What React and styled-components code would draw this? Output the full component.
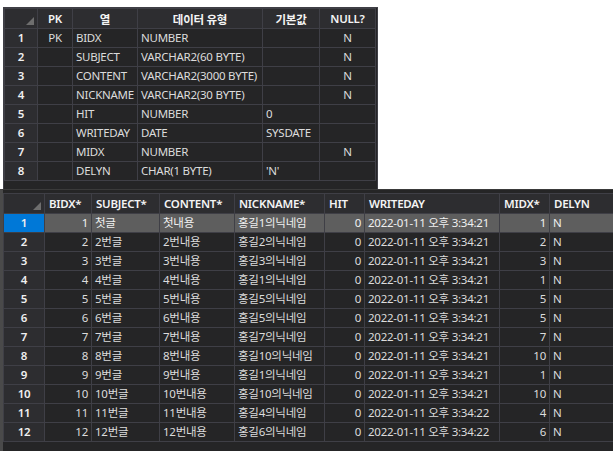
import React from "react";
import styled, { createGlobalStyle } from "styled-components";

const GlobalStyle = createGlobalStyle`
  html, body {
    margin: 0;
    padding: 0;
    background: #ffffff;
  }
  body {
    font-family: "Noto Sans", "Noto Sans CJK KR", sans-serif;
    font-size: 11.5px;
    letter-spacing: -0.25px;
  }
`;

const columns = [
  { name: "PK", w: 35 },
  { name: "열", w: 65 },
  { name: "데이터 유형", w: 125 },
  { name: "기본값", w: 57 },
  { name: "NULL?", w: 56 },
];

const columnRows = [
  ["PK", "BIDX", "NUMBER", "", "N"],
  ["", "SUBJECT", "VARCHAR2(60 BYTE)", "", "N"],
  ["", "CONTENT", "VARCHAR2(3000 BYTE)", "", "N"],
  ["", "NICKNAME", "VARCHAR2(30 BYTE)", "", "N"],
  ["", "HIT", "NUMBER", "0", ""],
  ["", "WRITEDAY", "DATE", "SYSDATE", ""],
  ["", "MIDX", "NUMBER", "", "N"],
  ["", "DELYN", "CHAR(1 BYTE)", "'N'", ""],
];

const dataCols = [
  { name: "BIDX*", w: 47, align: "right" },
  { name: "SUBJECT*", w: 68 },
  { name: "CONTENT*", w: 75 },
  { name: "NICKNAME*", w: 90 },
  { name: "HIT", w: 40, align: "right" },
  { name: "WRITEDAY", w: 135 },
  { name: "MIDX*", w: 50, align: "right" },
  { name: "DELYN", w: 80 },
];

const midx = [1, 2, 3, 1, 5, 5, 7, 10, 1, 10, 4, 6];

const dataRows = midx.map((m, i) => {
  const n = i + 1;
  return [
    String(n),
    n === 1 ? "첫글" : `${n}번글`,
    n === 1 ? "첫내용" : `${n}번내용`,
    `홍길${m}의닉네임`,
    "0",
    `2022-01-11 오후 3:34:${n >= 11 ? "22" : "21"}`,
    String(m),
    "N",
  ];
});

export default function App() {
  return (
    <Page>
      <GlobalStyle />
      <TopPanel>
        <Grid style={{ width: 371 }}>
          <colgroup>
            <col style={{ width: 33 }} />
            {columns.map((c) => (
              <col key={c.name} style={{ width: c.w }} />
            ))}
          </colgroup>
          <thead>
            <tr>
              <Corner>
                <Tri />
              </Corner>
              {columns.map((c) => (
                <Head key={c.name}>{c.name}</Head>
              ))}
            </tr>
          </thead>
          <tbody>
            {columnRows.map((r, i) => (
              <tr key={i}>
                <RowNum>{i + 1}</RowNum>
                {r.map((v, j) => (
                  <Cell key={j} $align={j === 0 || j === 4 ? "center" : "left"}>
                    {v}
                  </Cell>
                ))}
              </tr>
            ))}
          </tbody>
        </Grid>
      </TopPanel>
      <BottomPanel>
        <Grid style={{ width: 626 }}>
          <colgroup>
            <col style={{ width: 41 }} />
            {dataCols.map((c) => (
              <col key={c.name} style={{ width: c.w }} />
            ))}
          </colgroup>
          <thead>
            <tr>
              <Corner>
                <Tri />
              </Corner>
              {dataCols.map((c) => (
                <Head key={c.name} $align="left">
                  {c.name}
                </Head>
              ))}
            </tr>
          </thead>
          <tbody>
            {dataRows.map((r, i) => (
              <tr key={i}>
                <RowNum $selected={i === 0}>{i + 1}</RowNum>
                {r.map((v, j) => (
                  <Cell key={j} $align={dataCols[j].align} $selected={i === 0}>
                    {v}
                  </Cell>
                ))}
              </tr>
            ))}
          </tbody>
        </Grid>
      </BottomPanel>
    </Page>
  );
}

const Page = styled.div`
  width: 613px;
  height: 451px;
  overflow: hidden;
  display: flex;
  flex-direction: column;
`;

const TopPanel = styled.div`
  margin: 7px 0 0 3px;
  width: 375px;
  height: 182px;
  background: #252526;
  border: 1px solid #3f3f46;
  border-bottom: none;
  box-sizing: border-box;
  overflow: hidden;
`;

const BottomPanel = styled.div`
  flex: 1;
  background: #252526;
  border-left: 3px solid #4a4a4a;
  border-top: 1px solid #3a3a3a;
  padding-top: 3px;
  overflow: hidden;
`;

const Grid = styled.table`
  border-collapse: collapse;
  table-layout: fixed;
  color: #dcdcdc;
`;

const Head = styled.th`
  height: 19px;
  padding: 0 4px;
  background: #2d2d30;
  border: 1px solid #3f3f46;
  color: #f4f4f4;
  font-weight: 600;
  text-align: ${(p) => p.$align || "center"};
  white-space: nowrap;
  overflow: hidden;
`;

const Corner = styled(Head)`
  position: relative;
`;

const Tri = styled.span`
  position: absolute;
  right: 3px;
  bottom: 3px;
  width: 0;
  height: 0;
  border-left: 8px solid transparent;
  border-bottom: 8px solid #6e6e6e;
`;

const Cell = styled.td`
  height: 18px;
  line-height: 18px;
  padding: 0 3px;
  border: 1px solid #3f3f46;
  background: ${(p) => (p.$selected ? "#5e5e5e" : "#252526")};
  color: ${(p) => (p.$selected ? "#f0f0f0" : "#dcdcdc")};
  text-align: ${(p) => p.$align || "left"};
  white-space: nowrap;
  overflow: hidden;
`;

const RowNum = styled.td`
  height: 18px;
  line-height: 18px;
  padding: 0;
  border: 1px solid #3f3f46;
  background: ${(p) => (p.$selected ? "#0078d7" : "#2d2d30")};
  color: #f0f0f0;
  font-weight: 600;
  text-align: center;
`;
